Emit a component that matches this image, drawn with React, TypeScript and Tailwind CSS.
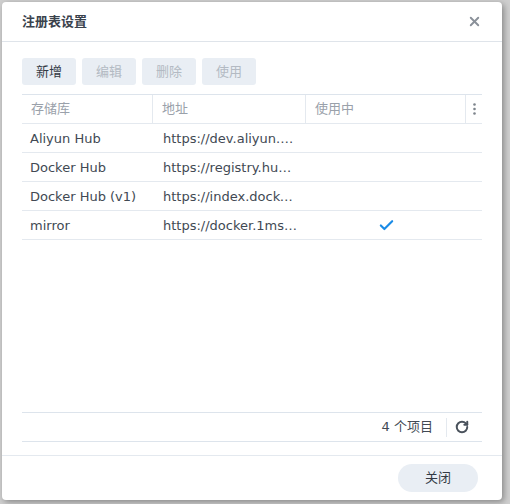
import { X, RotateCw, Check } from 'lucide-react'

const rows = [
  { name: 'Aliyun Hub', url: 'https://dev.aliyun.com', used: false },
  { name: 'Docker Hub', url: 'https://registry.hub.docker.com', used: false },
  { name: 'Docker Hub (v1)', url: 'https://index.docker.io', used: false },
  { name: 'mirror', url: 'https://docker.1ms.run', used: true },
]

const font = { fontFamily: '"DejaVu Sans", "Noto Sans CJK SC", sans-serif' }

function ToolButton({ label, disabled }: { label: string; disabled?: boolean }) {
  return (
    <button
      className={`h-[27px] w-[54px] rounded-[3px] bg-[#e9eef4] text-[13px] ${
        disabled ? 'text-[#b3bac3]' : 'text-[#333a44]'
      }`}
    >
      {label}
    </button>
  )
}

export default function App() {
  return (
    <div className="h-[504px] w-[510px] overflow-hidden bg-[#cfcfcf] pl-[2px] pt-[2px]" style={font}>
      <div className="flex h-[498px] w-[500px] flex-col rounded-[4px] bg-white shadow-[2px_2px_6px_rgba(0,0,0,0.35)]">
        <div className="flex h-[40px] shrink-0 items-center justify-between border-b border-[#dfe4ea] pl-[20px] pr-[20px]">
          <span className="text-[13px] font-bold text-[#3a424c]">注册表设置</span>
          <X size={15} strokeWidth={3} className="text-[#8a9099]" />
        </div>

        <div className="flex flex-1 flex-col px-[20px] pb-[13px] pt-[16px]">
          <div className="flex gap-[6px]">
            <ToolButton label="新增" />
            <ToolButton label="编辑" disabled />
            <ToolButton label="删除" disabled />
            <ToolButton label="使用" disabled />
          </div>

          <div className="mt-[9px] flex flex-1 flex-col border-t border-[#dde4ec]">
            <div className="flex h-[29px] border-b border-[#e4e9ef] text-[13px] text-[#9aa1aa]">
              <div className="flex w-[131px] items-center border-r border-[#e4e9ef] px-[9px]">存储库</div>
              <div className="flex w-[153px] items-center border-r border-[#e4e9ef] px-[9px]">地址</div>
              <div className="flex w-[160px] items-center border-r border-[#e4e9ef] px-[9px]">使用中</div>
              <div className="flex flex-1 items-center justify-center">
                <svg width="3" height="12" viewBox="0 0 3 12">
                  <circle cx="1.5" cy="1.5" r="1.3" fill="#7d848c" />
                  <circle cx="1.5" cy="6" r="1.3" fill="#7d848c" />
                  <circle cx="1.5" cy="10.5" r="1.3" fill="#7d848c" />
                </svg>
              </div>
            </div>

            {rows.map((r) => (
              <div key={r.name} className="flex h-[29px] border-b border-[#e4e9ef] pt-px text-[13px] text-[#414953]">
                <div className="flex w-[131px] items-center overflow-hidden whitespace-nowrap pl-[8px]">{r.name}</div>
                <div className="flex w-[153px] items-center pl-[10px] pr-[7px]">
                  <span className="block w-full overflow-hidden text-ellipsis whitespace-nowrap">{r.url}</span>
                </div>
                <div className="flex w-[160px] items-center justify-center">
                  {r.used && <Check size={17} strokeWidth={3} className="text-[#1a8be6]" />}
                </div>
              </div>
            ))}

            <div className="flex-1" />

            <div className="flex h-[30px] items-center justify-end border-y border-[#dde4ec] text-[13px] text-[#414953]">
              <span className="pr-[13px]">4 个项目</span>
              <div className="h-[19px] border-l border-[#e4e9ef]" />
              <div className="flex w-[35px] items-center justify-center pr-[6px]">
                <RotateCw size={14} strokeWidth={3.4} className="text-[#4a525c]" />
              </div>
            </div>
          </div>
        </div>

        <div className="flex h-[45px] shrink-0 items-center justify-end border-t border-[#e4e9ef] pr-[24px]">
          <button className="h-[28px] w-[80px] rounded-full bg-[#e9eef4] text-[13px] text-[#333a44]">关闭</button>
        </div>
      </div>
    </div>
  )
}
